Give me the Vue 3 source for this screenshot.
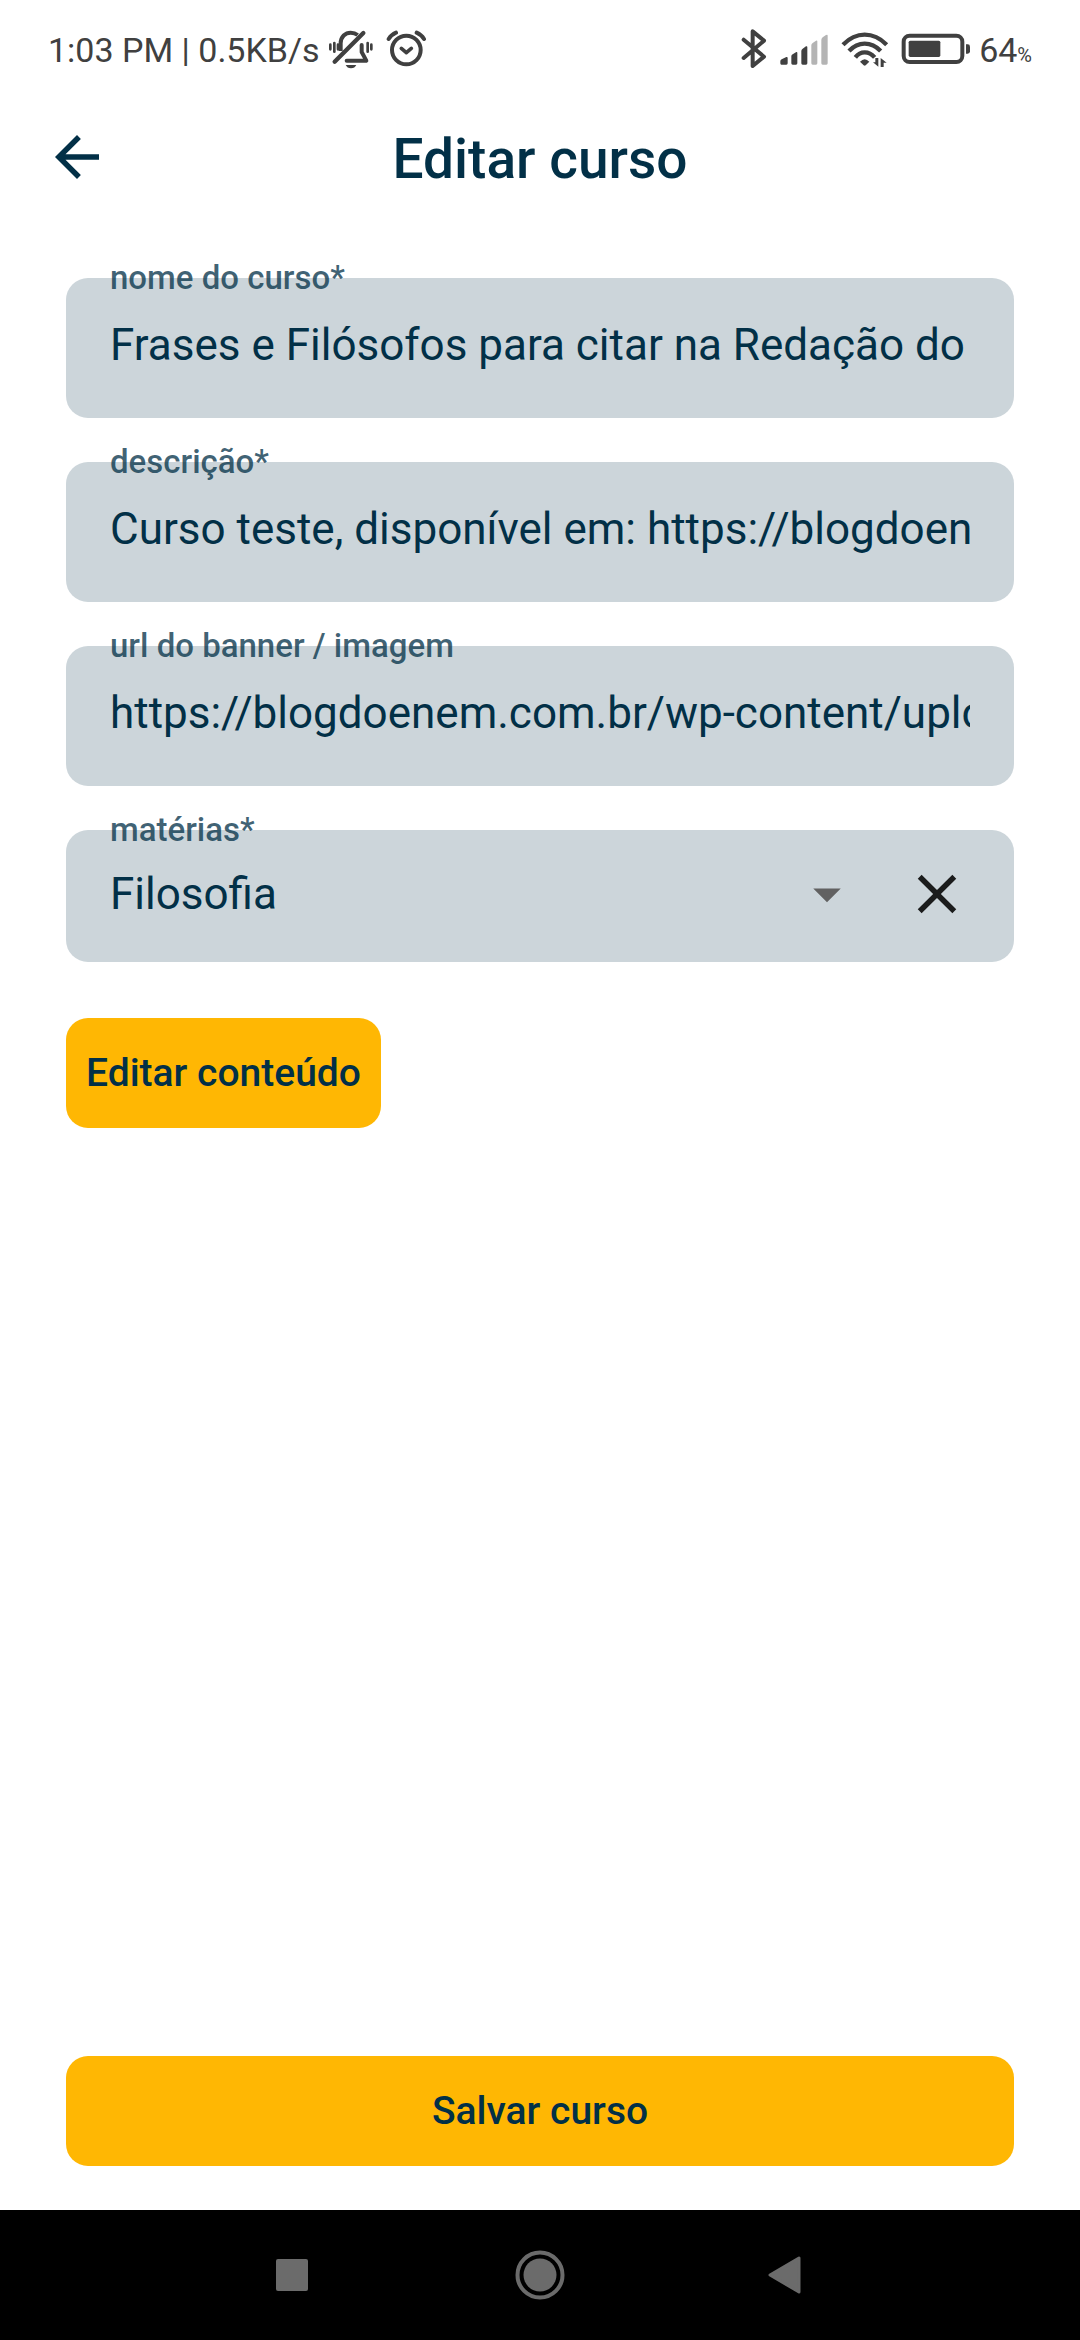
<script setup>
import { ref } from 'vue'

const fields = ref([
  { id: 'nome', label: 'nome do curso*', value: 'Frases e Filósofos para citar na Redação do Enem' },
  { id: 'descricao', label: 'descrição*', value: 'Curso teste, disponível em: https://blogdoenem.com.br' },
  { id: 'banner', label: 'url do banner / imagem', value: 'https://blogdoenem.com.br/wp-content/uploads' },
])
const subject = ref('Filosofia')
</script>

<template>
  <div class="screen">
    <div class="status">
      <span class="status-text">1:03 PM | 0.5KB/s</span>
      <div class="status-icons left">
        <svg width="46" height="42" viewBox="888 57 138 126" fill="none" stroke="#404040" stroke-linecap="round">
          <path d="M926 123V100C926 80 940 68 956 68C964 68 972 71 977 75" stroke-width="12" stroke-linecap="butt" />
          <path d="M908 155L994 69" stroke-width="13" />
          <path d="M989 105V126L1003 152H944" stroke-width="12" stroke-linejoin="round" />
          <path d="M941 165H973C970 171 965 175 957 175C949 175 944 171 941 165Z" fill="#404040" stroke="none" />
          <path d="M895 104V118M907 99V125M918 104V118M1007 99V125M1018 104V118" stroke-width="8" />
        </svg>
        <svg width="41" height="42" viewBox="1065 57 123 126" fill="none" stroke="#404040" stroke-linecap="round">
          <circle cx="1126" cy="120" r="43" stroke-width="12" />
          <path d="M1111 115L1126 128L1141 115" stroke-width="11" stroke-linejoin="round" />
          <path d="M1073 87Q1081 74 1095 68M1179 87Q1171 74 1157 68" stroke-width="12" />
        </svg>
      </div>
      <div class="status-icons right">
        <svg width="26" height="42" viewBox="66 57 78 126" fill="none" stroke="#404040" stroke-width="12" stroke-linecap="round" stroke-linejoin="round">
          <path d="M74 89L135 140L101 168V64L135 92L74 144" />
        </svg>
        <svg width="50" height="42" viewBox="180 57 150 126" fill="#404040">
          <path d="M184 154Q184 150 188 148L202 141Q206 140 206 144V160Q206 164 202 164H187Q184 164 184 160ZM217 139Q217 135 221 133L232 126Q235 125 235 129V160Q235 164 231 164H221Q217 164 217 160ZM247 123Q247 119 251 116L261 109Q265 107 265 112V160Q265 164 261 164H251Q247 164 247 160Z" />
          <path fill="#b4b4b4" d="M277 106Q277 102 281 99L291 92Q295 90 295 94V160Q295 164 291 164H281Q277 164 277 160ZM307 90Q307 86 311 82L321 75Q326 72 326 77V160Q326 164 322 164H311Q307 164 307 160Z" />
        </svg>
        <svg width="48" height="42" viewBox="363 57 144 126" fill="none" stroke="#404040" stroke-width="13">
          <path d="M369 104Q399 74 434 74Q470 74 500 104M387 123Q408 101 434 101Q461 101 482 123M406 142Q418 127 434 127Q451 127 464 142" />
          <path d="M420 155Q434 140 448 155L437 166Q434 168 431 166Z" fill="#404040" stroke="none" />
          <path d="M475 144V170L459 157H466V144ZM482 171V144L500 158H491V171Z" fill="#404040" stroke="none" />
        </svg>
        <svg width="70" height="42" viewBox="546 57 210 126">
          <rect x="554" y="77" width="176" height="79" rx="18" fill="none" stroke="#404040" stroke-width="12" />
          <rect x="569" y="92" width="95" height="49" rx="5" fill="#404040" />
          <path d="M741 103H746Q753 103 753 110V124Q753 131 746 131H741Z" fill="#404040" />
        </svg>
      </div>
      <span class="status-text">64<small>%</small></span>
    </div>

    <header class="app-bar">
      <button class="icon-button" type="button" aria-label="Voltar">
        <svg viewBox="0 0 24 24" fill="#023047"><path d="M20 11H7.830L13.420 5.410L12 4L4 12L12 20L13.410 18.590L7.830 13H20V11Z" /></svg>
      </button>
      <h1>Editar curso</h1>
    </header>

    <main>
      <div v-for="field in fields" :key="field.id" class="field">
        <label :for="field.id">{{ field.label }}</label>
        <input :id="field.id" v-model="field.value" type="text" />
      </div>

      <div class="field select-field">
        <label for="materias">matérias*</label>
        <select id="materias" v-model="subject">
          <option>Filosofia</option>
        </select>
        <svg class="arrow" viewBox="0 0 24 24" fill="#616161"><path d="M7 10L12 15L17 10Z" /></svg>
        <button class="icon-button" type="button" aria-label="Limpar">
          <svg viewBox="0 0 24 24" fill="#1b1c1c"><path d="M19 6.410L17.590 5L12 10.590L6.410 5L5 6.410L10.590 12L5 17.590L6.410 19L12 13.410L17.590 19L19 17.590L13.410 12Z" /></svg>
        </button>
      </div>

      <button class="action edit" type="button">Editar conteúdo</button>
      <button class="action save" type="button">Salvar curso</button>
    </main>

    <nav>
      <button type="button" aria-label="Recentes">
        <svg viewBox="0 0 50 50"><rect x="9" y="9" width="32" height="32" rx="2" fill="#6b6b6b" /></svg>
      </button>
      <button type="button" aria-label="Início">
        <svg viewBox="0 0 50 50"><circle cx="25" cy="25" r="22.500" fill="none" stroke="#6b6b6b" stroke-width="4" /><circle cx="25" cy="25" r="16.500" fill="#6b6b6b" /></svg>
      </button>
      <button type="button" aria-label="Voltar ao anterior">
        <svg viewBox="0 0 50 50"><path d="M7 25L36 8V42Z" fill="#6b6b6b" stroke="#6b6b6b" stroke-width="3" stroke-linejoin="round" /></svg>
      </button>
    </nav>
  </div>
</template>

<style>
body {
  margin: 0;
  background: #fff;
}
</style>

<style scoped>
.screen {
  min-height: 100vh;
  display: flex;
  flex-direction: column;
  font-family: Roboto, "Noto Sans", sans-serif;
  color: #023047;
}

.screen * {
  box-sizing: border-box;
}

button {
  border: 0;
  padding: 0;
  background: none;
  font: inherit;
  color: inherit;
}

svg {
  display: block;
  flex: none;
}

.status {
  height: 80px;
  padding: 20px 48px 0;
  display: flex;
  align-items: center;
  color: #404040;
}

.status-text {
  font-size: 34px;
  line-height: 40px;
  white-space: nowrap;
}

.status-text small {
  font-size: 20px;
  line-height: 20px;
}

.status-icons {
  display: flex;
  align-items: center;
  gap: 12px;
}

.left {
  margin-left: 8px;
}

.right {
  margin-left: auto;
  margin-right: 8px;
}

.app-bar {
  height: 154px;
  padding: 0 44px;
  display: grid;
  grid-template-columns: 66px 1fr 66px;
  align-items: center;
}

h1 {
  margin: 0;
  padding-top: 4px;
  text-align: center;
  font-size: 55px;
  font-weight: 500;
  line-height: 66px;
}

.icon-button,
.icon-button svg,
.arrow {
  width: 66px;
  height: 66px;
}

main {
  flex: 1;
  padding: 44px 66px;
  display: flex;
  flex-direction: column;
  gap: 44px;
}

.field {
  position: relative;
  display: flex;
  align-items: center;
  padding: 41px 44px 47px;
  border-radius: 22px;
  background: #ccd5da;
}

.field label {
  position: absolute;
  top: -20px;
  left: 44px;
  font-size: 33px;
  font-weight: 500;
  line-height: 40px;
  color: rgba(2, 48, 71, 0.75);
}

input,
select {
  flex: 1;
  min-width: 0;
  height: 52px;
  padding: 0;
  border: 0;
  outline: 0;
  background: none;
  appearance: none;
  font: inherit;
  font-size: 44px;
  line-height: 52px;
  color: inherit;
}

.select-field {
  padding: 31px 44px 35px;
  gap: 44px;
}

.action {
  height: 110px;
  padding: 0 20px;
  border-radius: 22px;
  background: #ffb703;
  font-size: 39px;
  font-weight: 500;
}

.edit {
  align-self: flex-start;
  margin-top: 12px;
}

.save {
  margin-top: auto;
}

nav {
  height: 130px;
  display: flex;
  justify-content: center;
  background: #000;
}

nav button {
  width: 248px;
  display: flex;
  align-items: center;
  justify-content: center;
}

nav svg {
  width: 50px;
  height: 50px;
}
</style>
